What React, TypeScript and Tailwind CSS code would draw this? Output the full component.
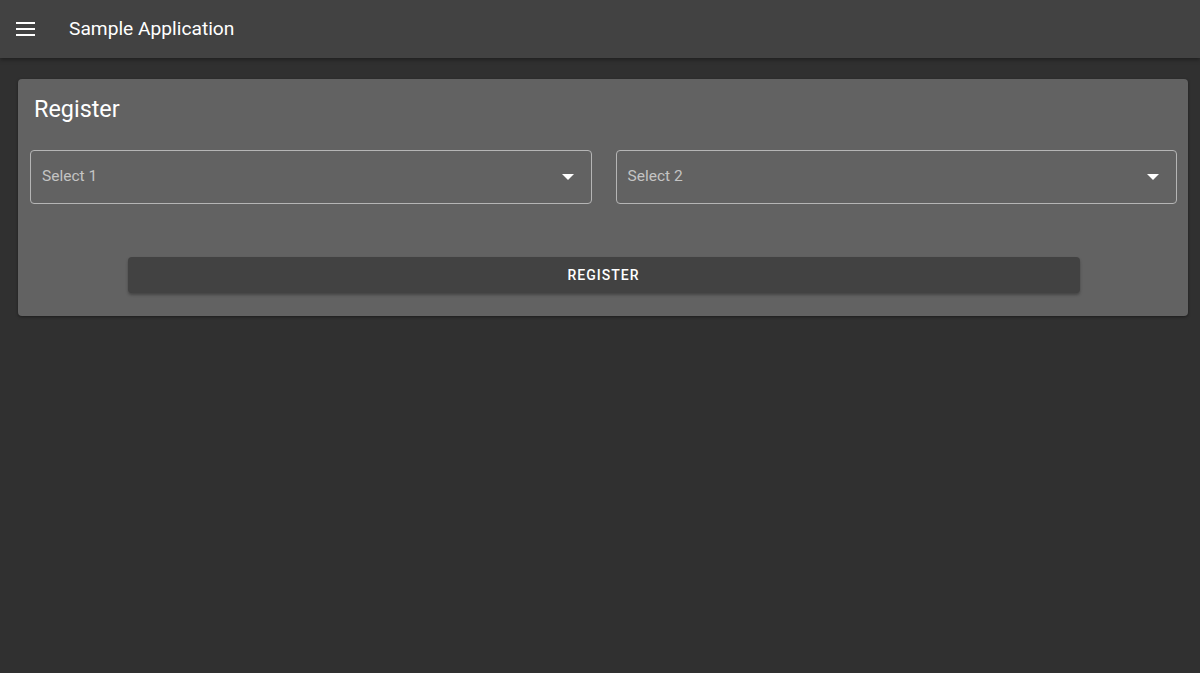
const SelectBox = ({ label }: { label: string }) => {
  return (
    <div className="relative flex h-[54px] flex-1 items-center rounded border border-[#b5b5b5] px-[11px]">
      <span className="text-[15.5px] text-[#c4c4c4]">{label}</span>
      <svg
        className="absolute right-[17px] top-1/2 -translate-y-1/2"
        width="12"
        height="6"
        viewBox="0 0 10 5"
      >
        <path d="M0 0 L5 5 L10 0 Z" fill="#ffffff" />
      </svg>
    </div>
  );
};

const App = () => {
  return (
    <div
      className="min-h-[673px] bg-[#303030] text-white"
      style={{ fontFamily: 'Roboto, "Liberation Sans", sans-serif' }}
    >
      {/* Top bar */}
      <header className="flex h-[58px] items-center bg-[#424242] px-4 shadow-[0_2px_4px_rgba(0,0,0,0.35)]">
        <svg width="20" height="14" viewBox="0 0 20 14" className="mr-[33px]">
          <rect x="0" y="0" width="19" height="2" fill="#fff" />
          <rect x="0" y="6" width="19" height="2" fill="#fff" />
          <rect x="0" y="12" width="19" height="2" fill="#fff" />
        </svg>
        <h1 className="text-[19.2px] font-normal">Sample Application</h1>
      </header>

      <main className="pl-[18px] pr-[12px] pt-[21px]">
        <div className="rounded bg-[#626262] pl-3 pr-[11px] pb-[23px] pt-[13px] shadow-[0_1px_3px_rgba(0,0,0,0.4)]">
          <h2 className="px-1 text-[23.4px] leading-[34px] font-normal">Register</h2>

          {/* Selects */}
          <div className="mt-[24px] flex gap-[24px]">
            <SelectBox label="Select 1" />
            <SelectBox label="Select 2" />
          </div>

          {/* Button */}
          <div className="mt-[53px] flex justify-center">
            <button className="h-9 w-[952px] rounded bg-[#424242] text-sm font-medium tracking-[1px] text-white shadow-[0_2px_3px_rgba(0,0,0,0.3)]">
              REGISTER
            </button>
          </div>
        </div>
      </main>
    </div>
  );
};

export default App;
